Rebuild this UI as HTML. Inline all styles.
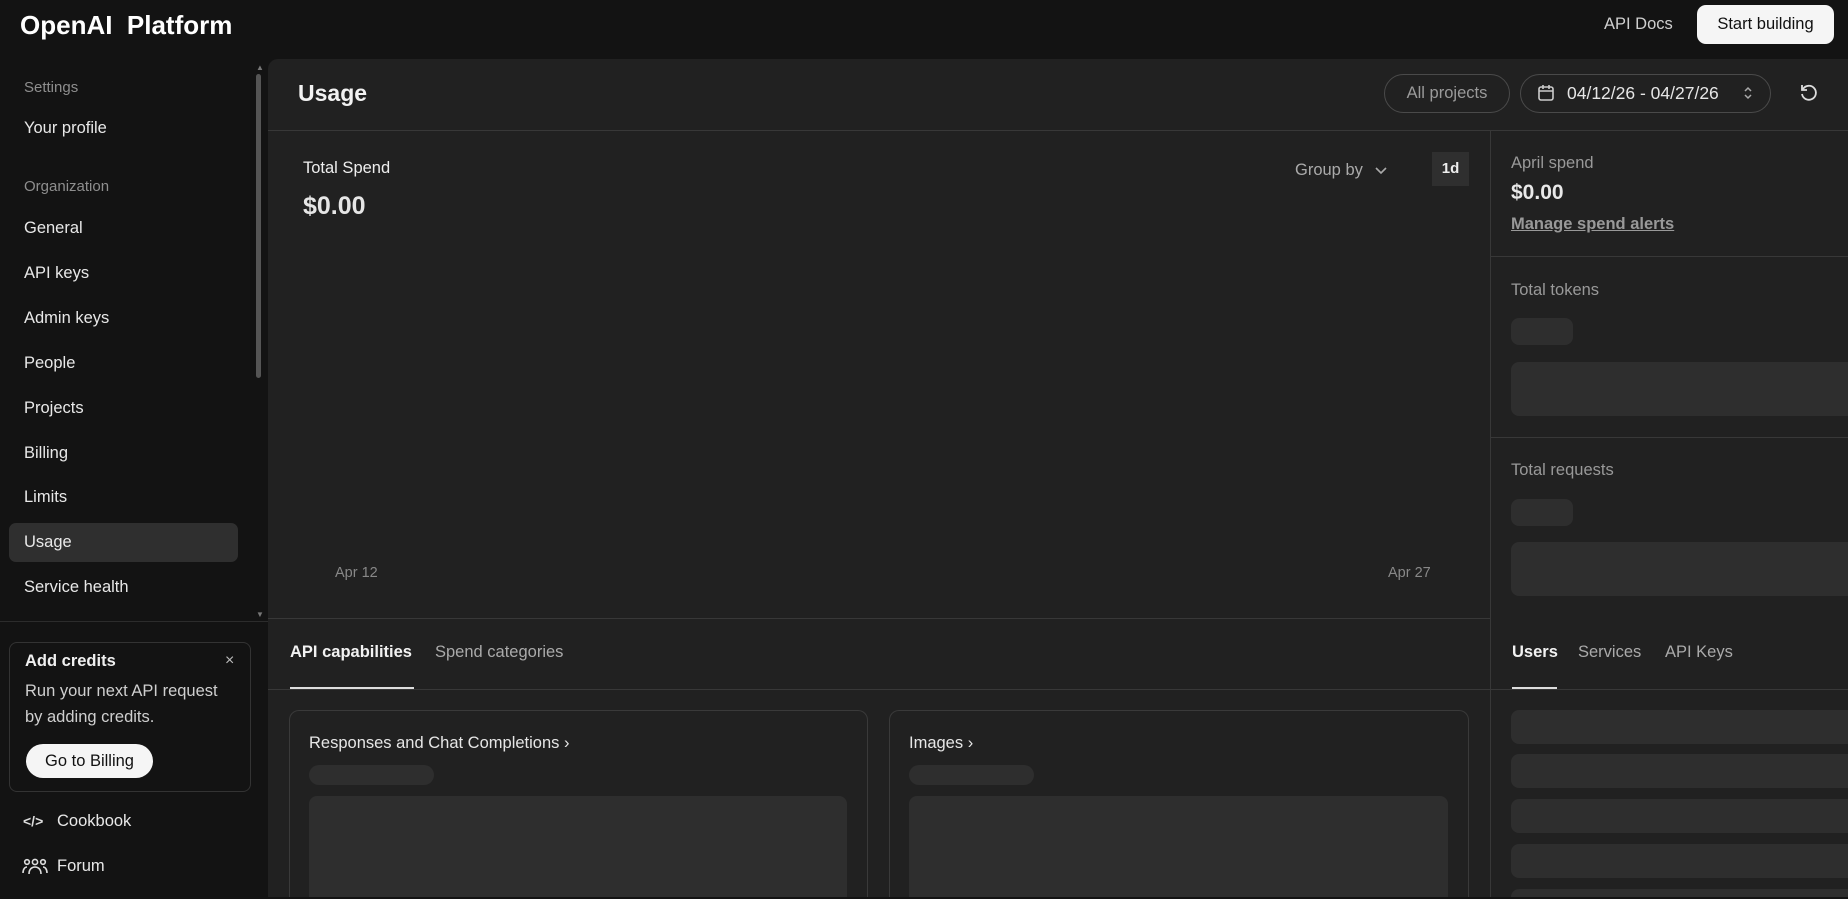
<!DOCTYPE html>
<html style="overflow:hidden;width:1848px;height:899px"><head><meta charset="utf-8"><style>
*{box-sizing:border-box;margin:0;padding:0}
body{width:1848px;height:899px;background:#131313;font-family:"Liberation Sans",sans-serif;color:#ececec;position:relative;overflow:hidden}
#w{position:absolute;left:0;top:0;width:1848px;height:899px;overflow:hidden}
.a{position:absolute;white-space:nowrap}
.nav{font-size:16.5px;color:#e8e8e8;left:24px}
.sec{font-size:15px;color:#8e8e8e;left:24px}
.sk{position:absolute;background:#2e2e2e;border-radius:8px}
</style></head><body><div id="w">
<div class="a" style="left:20px;top:10px;font-size:26px;font-weight:bold;color:#fff">OpenAI&nbsp; Platform</div>
<div class="a" style="left:1604px;top:15px;font-size:16.5px;color:#cfcfcf">API Docs</div>
<div class="a" style="left:1697px;top:5px;width:137px;height:39px;background:#f5f5f5;border-radius:9px;color:#111;font-size:16.5px;line-height:39px;text-align:center">Start building</div>

<div class="a sec" style="top:79px">Settings</div>
<div class="a nav" style="top:119px">Your profile</div>
<div class="a sec" style="top:178px">Organization</div>
<div class="a nav" style="top:219px">General</div>
<div class="a nav" style="top:264px">API keys</div>
<div class="a nav" style="top:309px">Admin keys</div>
<div class="a nav" style="top:354px">People</div>
<div class="a nav" style="top:399px">Projects</div>
<div class="a nav" style="top:444px">Billing</div>
<div class="a nav" style="top:488px">Limits</div>
<div class="a" style="left:9px;top:523px;width:229px;height:39px;background:#2f2f2f;border-radius:7px"></div>
<div class="a nav" style="top:533px">Usage</div>
<div class="a nav" style="top:578px">Service health</div>
<div class="a" style="left:256px;top:74px;width:5px;height:304px;background:#555;border-radius:3px"></div>
<div class="a" style="left:256px;top:63px;font-size:8px;color:#777">▲</div>
<div class="a" style="left:256px;top:610px;font-size:8px;color:#777">▼</div>
<div class="a" style="left:0;top:621px;width:268px;height:1px;background:#2c2c2c"></div>

<div class="a" style="left:9px;top:642px;width:242px;height:150px;border:1px solid #333;border-radius:8px"></div>
<div class="a" style="left:25px;top:652px;font-size:16.5px;font-weight:bold;color:#f0f0f0">Add credits</div>
<div class="a" style="left:225px;top:652px;font-size:16px;color:#bbb">×</div>
<div class="a" style="left:25px;top:678px;font-size:16.5px;color:#cfcfcf;line-height:26px">Run your next API request<br>by adding credits.</div>
<div class="a" style="left:26px;top:744px;width:127px;height:34px;background:#f5f5f5;border-radius:17px;color:#111;font-size:16.5px;line-height:34px;text-align:center">Go to Billing</div>
<div class="a" style="left:23px;top:813px;font-size:14px;color:#ddd;font-weight:bold">&lt;/&gt;</div>
<div class="a nav" style="left:57px;top:812px">Cookbook</div>
<svg class="a" style="left:22px;top:858px" width="26" height="18" viewBox="0 0 26 18" fill="none" stroke="#ddd" stroke-width="1.6"><circle cx="5" cy="4" r="2.3"/><circle cx="13" cy="4" r="2.6"/><circle cx="21" cy="4" r="2.3"/><path d="M1 15c0-4 2-6 4-6M7 16c0-5 3-7 6-7s6 2 6 7M25 15c0-4-2-6-4-6"/></svg>
<div class="a nav" style="left:57px;top:857px">Forum</div>

<div class="a" style="left:268px;top:59px;width:1580px;height:838px;background:#212121;border-top-left-radius:10px;overflow:hidden">
<div class="a" style="left:30px;top:21px;font-size:23px;font-weight:bold;color:#f2f2f2">Usage</div>
<div class="a" style="left:1116px;top:15px;width:126px;height:39px;border:1px solid #4a4a4a;border-radius:20px;color:#9a9a9a;font-size:16.5px;line-height:37px;text-align:center">All projects</div>
<div class="a" style="left:1252px;top:15px;width:251px;height:39px;border:1px solid #4a4a4a;border-radius:20px"></div>
<svg class="a" style="left:1269px;top:25px" width="18" height="18" viewBox="0 0 18 18" fill="none" stroke="#ccc" stroke-width="1.6"><rect x="2" y="3" width="14" height="13" rx="2"/><path d="M2 7h14M6 1v4M12 1v4"/></svg>
<div class="a" style="left:1299px;top:24px;font-size:17.5px;color:#e6e6e6">04/12/26 - 04/27/26</div>
<svg class="a" style="left:1474px;top:25px" width="12" height="18" viewBox="0 0 12 18" fill="none" stroke="#aaa" stroke-width="1.5"><path d="M3 7l3-3 3 3M3 11l3 3 3-3"/></svg>
<svg class="a" style="left:1531px;top:24px" width="20" height="20" viewBox="0 0 20 20" fill="none" stroke="#ddd" stroke-width="1.8"><path d="M4 6a7 7 0 1 1-1 5"/><path d="M3 2v5h5"/></svg>
<div class="a" style="left:0;top:71px;width:1580px;height:1px;background:#383838"></div>
<div class="a" style="left:1222px;top:71px;width:1px;height:767px;background:#383838"></div>
<div class="a" style="left:0;top:559px;width:1222px;height:1px;background:#383838"></div>
<div class="a" style="left:1222px;top:197px;width:358px;height:1px;background:#383838"></div>
<div class="a" style="left:1222px;top:378px;width:358px;height:1px;background:#383838"></div>

<div class="a" style="left:35px;top:100px;font-size:16.5px;color:#eee">Total Spend</div>
<div class="a" style="left:35px;top:133px;font-size:25px;font-weight:bold;color:#e6e6e6">$0.00</div>
<div class="a" style="left:1027px;top:102px;font-size:16.5px;color:#aaa">Group by</div>
<svg class="a" style="left:1106px;top:106px" width="14" height="12" viewBox="0 0 14 12" fill="none" stroke="#aaa" stroke-width="1.6"><path d="M2 3l5 5 5-5"/></svg>
<div class="a" style="left:1164px;top:93px;width:37px;height:34px;background:#2f2f2f;color:#eee;font-size:15px;font-weight:bold;line-height:34px;text-align:center">1d</div>
<div class="a" style="left:67px;top:506px;font-size:14.5px;color:#888">Apr 12</div>
<div class="a" style="left:1120px;top:506px;font-size:14.5px;color:#888">Apr 27</div>

<div class="a" style="left:1243px;top:95px;font-size:16.5px;color:#999">April spend</div>
<div class="a" style="left:1243px;top:122px;font-size:21px;font-weight:bold;color:#e8e8e8">$0.00</div>
<div class="a" style="left:1243px;top:156px;font-size:16.5px;font-weight:bold;color:#999;text-decoration:underline">Manage spend alerts</div>
<div class="a" style="left:1243px;top:222px;font-size:16.5px;color:#999">Total tokens</div>
<div class="sk" style="left:1243px;top:259px;width:62px;height:27px"></div>
<div class="sk" style="left:1243px;top:303px;width:337px;height:54px;border-radius:8px 0 0 8px"></div>
<div class="a" style="left:1243px;top:402px;font-size:16.5px;color:#999">Total requests</div>
<div class="sk" style="left:1243px;top:440px;width:62px;height:27px"></div>
<div class="sk" style="left:1243px;top:483px;width:337px;height:54px;border-radius:8px 0 0 8px"></div>

<div class="a" style="left:22px;top:584px;font-size:16.5px;font-weight:bold;color:#f2f2f2">API capabilities</div>
<div class="a" style="left:167px;top:584px;font-size:16.5px;color:#aaa">Spend categories</div>
<div class="a" style="left:0;top:630px;width:1222px;height:1px;background:#383838"></div>
<div class="a" style="left:22px;top:628px;width:124px;height:2px;background:#ddd"></div>
<div class="a" style="left:1244px;top:584px;font-size:16.5px;font-weight:bold;color:#f2f2f2">Users</div>
<div class="a" style="left:1310px;top:584px;font-size:16.5px;color:#aaa">Services</div>
<div class="a" style="left:1397px;top:584px;font-size:16.5px;color:#aaa">API Keys</div>
<div class="a" style="left:1222px;top:630px;width:358px;height:1px;background:#383838"></div>
<div class="a" style="left:1244px;top:628px;width:45px;height:2px;background:#ddd"></div>

<div class="a" style="left:21px;top:651px;width:579px;height:187px;border:1px solid #3a3a3a;border-bottom:none;border-radius:10px 10px 0 0"></div>
<div class="a" style="left:41px;top:675px;font-size:16.5px;color:#e6e6e6">Responses and Chat Completions ›</div>
<div class="sk" style="left:41px;top:706px;width:125px;height:20px;border-radius:10px"></div>
<div class="sk" style="left:41px;top:737px;width:538px;height:101px;border-radius:8px 8px 0 0"></div>
<div class="a" style="left:621px;top:651px;width:580px;height:187px;border:1px solid #3a3a3a;border-bottom:none;border-radius:10px 10px 0 0"></div>
<div class="a" style="left:641px;top:675px;font-size:16.5px;color:#e6e6e6">Images ›</div>
<div class="sk" style="left:641px;top:706px;width:125px;height:20px;border-radius:10px"></div>
<div class="sk" style="left:641px;top:737px;width:539px;height:101px;border-radius:8px 8px 0 0"></div>

<div class="sk" style="left:1243px;top:651px;width:337px;height:34px;border-radius:8px 0 0 8px"></div>
<div class="sk" style="left:1243px;top:695px;width:337px;height:34px;border-radius:8px 0 0 8px"></div>
<div class="sk" style="left:1243px;top:740px;width:337px;height:34px;border-radius:8px 0 0 8px"></div>
<div class="sk" style="left:1243px;top:785px;width:337px;height:34px;border-radius:8px 0 0 8px"></div>
<div class="sk" style="left:1243px;top:830px;width:337px;height:8px;border-radius:8px 0 0 0"></div>
</div>
</div></body></html>
